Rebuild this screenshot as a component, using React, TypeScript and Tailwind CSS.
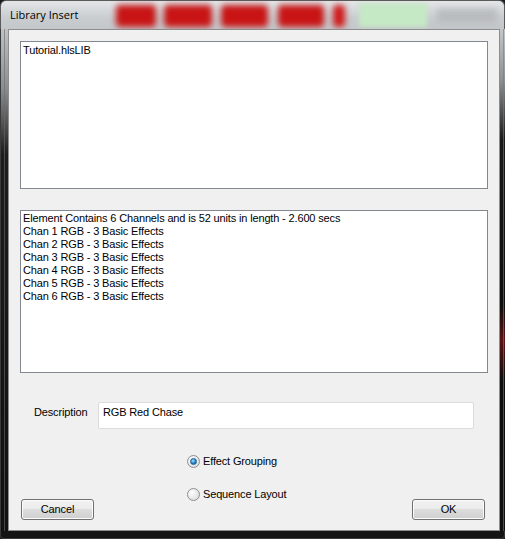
import React from 'react';

const lines = [
  'Element Contains 6 Channels and is 52 units in length - 2.600 secs',
  'Chan 1 RGB - 3 Basic Effects',
  'Chan 2 RGB - 3 Basic Effects',
  'Chan 3 RGB - 3 Basic Effects',
  'Chan 4 RGB - 3 Basic Effects',
  'Chan 5 RGB - 3 Basic Effects',
  'Chan 6 RGB - 3 Basic Effects',
];

function Radio({ checked, label }: { checked?: boolean; label: string }) {
  return (
    <div className="flex items-center gap-[3px] h-[13px]">
      <span className="w-[13px] h-[13px] rounded-full border border-[#8e8f8f] bg-[radial-gradient(circle_at_35%_35%,#ffffff,#d4d4d4)] flex items-center justify-center shrink-0">
        {checked && (
          <span className="w-[7px] h-[7px] rounded-full bg-[radial-gradient(circle_at_40%_35%,#9fe0ff,#1b7fc4_60%,#0b4f8a)] border border-[#1d5f91]" />
        )}
      </span>
      <span>{label}</span>
    </div>
  );
}

function WinButton({ children }: { children: React.ReactNode }) {
  return (
    <button className="w-[73px] h-[21px] rounded-[3px] border border-[#707070] bg-[linear-gradient(#f2f2f2_0%,#ebebeb_50%,#dddddd_50%,#cfcfcf_100%)] shadow-[inset_0_0_0_1px_#fcfcfc] text-black">
      {children}
    </button>
  );
}

export default function App() {
  return (
    <div
      className="w-[505px] h-[539px] flex flex-col bg-[#1a1a1a] text-[11px] tracking-[-0.15px] text-black overflow-hidden"
      style={{ fontFamily: '"Liberation Sans", Arial, sans-serif' }}
    >
      {/* title bar */}
      <div className="relative h-[29px] shrink-0 rounded-t-[6px] border border-b-0 border-[#5a5a5a] bg-[linear-gradient(#e4e6e8,#c9cdd0_60%,#c3c7ca)] overflow-hidden">
        <div className="absolute left-[115px] top-[4px] w-[40px] h-[22px] bg-[#c81414] blur-[3px] rounded" />
        <div className="absolute left-[163px] top-[4px] w-[48px] h-[22px] bg-[#c81414] blur-[3px] rounded" />
        <div className="absolute left-[220px] top-[4px] w-[47px] h-[22px] bg-[#c81414] blur-[3px] rounded" />
        <div className="absolute left-[277px] top-[4px] w-[46px] h-[22px] bg-[#c81414] blur-[3px] rounded" />
        <div className="absolute left-[332px] top-[4px] w-[12px] h-[22px] bg-[#d01818] blur-[3px] rounded" />
        <div className="absolute left-[358px] top-[2px] w-[68px] h-[24px] bg-[#c5e8c5] blur-[2px]" />
        <div className="absolute left-[436px] top-[8px] w-[60px] h-[14px] bg-[#b9bcbf] blur-[3px]" />
        <div
          className="relative pl-[9px] pt-[6px] text-[11px] tracking-normal text-black"
          style={{ fontFamily: '"Open Sans", "Liberation Sans", sans-serif' }}
        >
          Library Insert
        </div>
      </div>

      <div className="flex flex-1 min-h-0">
        {/* left frame */}
        <div className="w-[8px] shrink-0 border-l border-[#3a3a3a] bg-[linear-gradient(#bfc3c6_0%,#8a8d90_12%,#1c1c1c_25%,#111111_100%)] flex justify-center">
          <div className="w-[1px] h-full bg-[#6a6a6a] opacity-60" />
        </div>

        {/* client area */}
        <div className="flex-1 bg-[#f0f0f0] border border-[#8d8d8d] flex flex-col px-[11px] pt-[11px]">
          <div className="h-[148px] w-[468px] bg-white border border-[#828790] px-[2px] pt-[2px] leading-[13px] shrink-0">
            Tutorial.hlsLIB
          </div>

          <div className="mt-[21px] h-[163px] w-[468px] bg-white border border-[#828790] px-[2px] pt-[1px] leading-[13px] shrink-0">
            {lines.map((l) => (
              <div key={l}>{l}</div>
            ))}
          </div>

          <div className="mt-[29px] flex items-start">
            <span className="ml-[14px] w-[64px] mt-[4px] leading-[13px]">Description</span>
            <div className="w-[376px] h-[27px] bg-white border border-[#dcdcdc] rounded-[2px] pl-[4px] pt-[3px] leading-[13px]">
              RGB Red Chase
            </div>
          </div>

          <div className="mt-[26px] ml-[167px] flex flex-col gap-[20px]">
            <Radio checked label="Effect Grouping" />
            <Radio label="Sequence Layout" />
          </div>

          <div className="mt-[-2px] flex justify-between pl-[1px] pr-[3px]">
            <WinButton>Cancel</WinButton>
            <WinButton>OK</WinButton>
          </div>
        </div>

        {/* right frame */}
        <div className="w-[8px] shrink-0 border-r border-[#3a3a3a] bg-[linear-gradient(#c4c7ca_0%,#8f9295_10%,#1a1a1a_22%,#0e0e0e_55%,#5a1414_62%,#0e0e0e_70%,#101010_100%)] flex justify-center">
          <div className="w-[1px] h-full bg-[#7a7a7a] opacity-60" />
        </div>
      </div>

      {/* bottom frame */}
      <div className="h-[8px] shrink-0 bg-[#141414] border-b border-x border-[#3a3a3a] rounded-b-[4px]" />
    </div>
  );
}
